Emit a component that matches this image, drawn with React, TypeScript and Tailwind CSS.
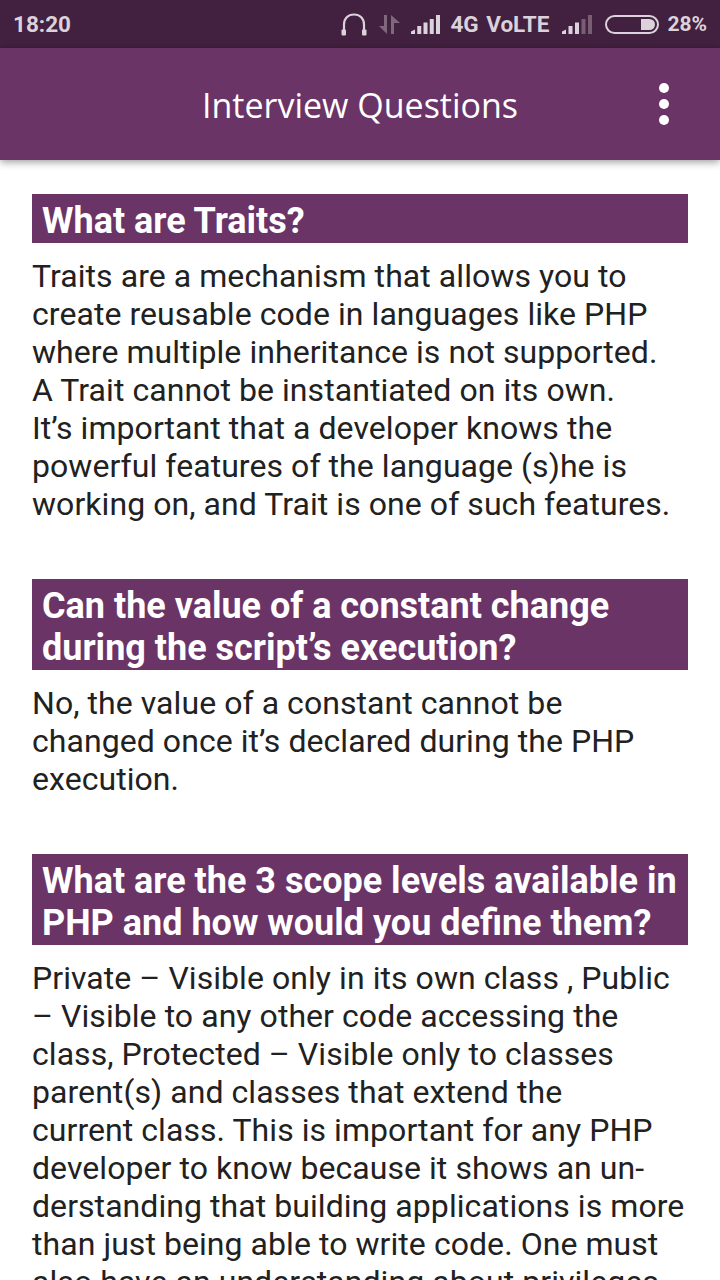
const questions = [
  {
    title: ["What are Traits?"],
    body: [
      "Traits are a mechanism that allows you to",
      "create reusable code in languages like PHP",
      "where multiple inheritance is not supported.",
      "A Trait cannot be instantiated on its own.",
      "It’s important that a developer knows the",
      "powerful features of the language (s)he is",
      "working on, and Trait is one of such features.",
    ],
  },
  {
    title: ["Can the value of a constant change", "during the script’s execution?"],
    body: [
      "No, the value of a constant cannot be",
      "changed once it’s declared during the PHP",
      "execution.",
    ],
  },
  {
    title: ["What are the 3 scope levels available in", "PHP and how would you define them?"],
    body: [
      "Private – Visible only in its own class , Public",
      "– Visible to any other code accessing the",
      "class, Protected – Visible only to classes",
      "parent(s) and classes that extend the",
      "current class. This is important for any PHP",
      "developer to know because it shows an un-",
      "derstanding that building applications is more",
      "than just being able to write code. One must",
      "also have an understanding about privileges",
    ],
  },
];

function StatusIcons() {
  return (
    <div className="flex items-center text-[#dcd2db]">
      {/* headphones */}
      <svg width="26" height="23" viewBox="0 0 26 23" fill="none" className="mr-[12px]">
        <path d="M3 20V11.5C3 5.5 7 1.5 13 1.5S23 5.5 23 11.5V20" stroke="currentColor" strokeWidth="2.2" />
        <rect x="0.5" y="16.5" width="4.5" height="6" rx="1" fill="currentColor" />
        <rect x="21" y="16.5" width="4.5" height="6" rx="1" fill="currentColor" />
      </svg>
      {/* data arrows */}
      <svg width="21" height="19" viewBox="0 0 21 19" className="mr-[11px] opacity-40">
        <path d="M5 0H8V19L0 11H5Z" fill="currentColor" />
        <path d="M12 19H15V8H21L12 0Z" fill="currentColor" />
      </svg>
      <svg width="29" height="19" viewBox="0 0 29 19" className="mr-[10px]">
        <path d="M0 19V16.5L4 14.5V19Z" fill="currentColor" />
        <rect x="6.25" y="11" width="4" height="8" fill="currentColor" />
        <rect x="12.5" y="7.5" width="4" height="11.5" fill="currentColor" />
        <rect x="18.75" y="4" width="4" height="15" fill="currentColor" />
        <rect x="25" y="0" width="4" height="19" fill="currentColor" />
      </svg>
      <span className="text-[22.5px] font-bold leading-none mr-[12px] w-[100px] whitespace-nowrap [word-spacing:2px]">4G VoLTE</span>
      <svg width="30" height="19" viewBox="0 0 30 19" className="mr-[13px]">
        <path d="M0 19V16.5L4 14.5V19Z" fill="currentColor" />
        <rect x="6.5" y="11" width="4" height="8" fill="currentColor" />
        <rect x="13" y="7.5" width="4" height="11.5" fill="currentColor" />
        <rect x="19.5" y="4" width="4" height="15" fill="currentColor" opacity="0.35" />
        <rect x="26" y="0" width="4" height="19" fill="currentColor" opacity="0.35" />
      </svg>
      {/* battery */}
      <div className="w-[54px] h-[19px] rounded-full border-2 border-[#dcd2db] flex justify-end p-[2px] mr-[8px]">
        <div className="w-[14px] h-full bg-[#dcd2db] rounded-r-full" />
      </div>
      <span className="text-[21px] font-bold leading-none">28%</span>
    </div>
  );
}

export default function App() {
  return (
    <div className="w-[720px] h-[1280px] overflow-hidden bg-white font-['Roboto',sans-serif]">
      <div className="h-[48px] bg-[#42203f] flex items-center justify-between px-[13px]">
        <span className="text-[22.5px] font-bold leading-none text-[#dcd2db]">18:20</span>
        <StatusIcons />
      </div>

      <header className="relative h-[112px] bg-[#6b3467] flex items-center justify-center shadow-[0_2px_8px_rgba(0,0,0,0.4)]">
        <h1 className="text-[34px] leading-none text-white font-['Open_Sans',sans-serif] mt-[2px]">Interview Questions</h1>
        <div className="absolute right-[51px] top-[35px] flex flex-col gap-[6px]">
          <span className="w-[10px] h-[10px] rounded-full bg-white" />
          <span className="w-[10px] h-[10px] rounded-full bg-white" />
          <span className="w-[10px] h-[10px] rounded-full bg-white" />
        </div>
      </header>

      <main className="px-[32px] pt-[34px] flex flex-col gap-[56px]">
        {questions.map((q) => (
          <section key={q.title[0]}>
            <h2 className="bg-[#6b3467] text-white font-bold text-[36px] leading-[42px] pl-[10px] pt-[6px] pb-[1px] whitespace-nowrap">
              {q.title.map((line) => (
                <div key={line}>{line}</div>
              ))}
            </h2>
            <div className="mt-[14px] text-[32px] leading-[38px] tracking-[0.06px] text-[#212121] whitespace-nowrap">
              {q.body.map((line) => (
                <p key={line}>{line}</p>
              ))}
            </div>
          </section>
        ))}
      </main>
    </div>
  );
}
